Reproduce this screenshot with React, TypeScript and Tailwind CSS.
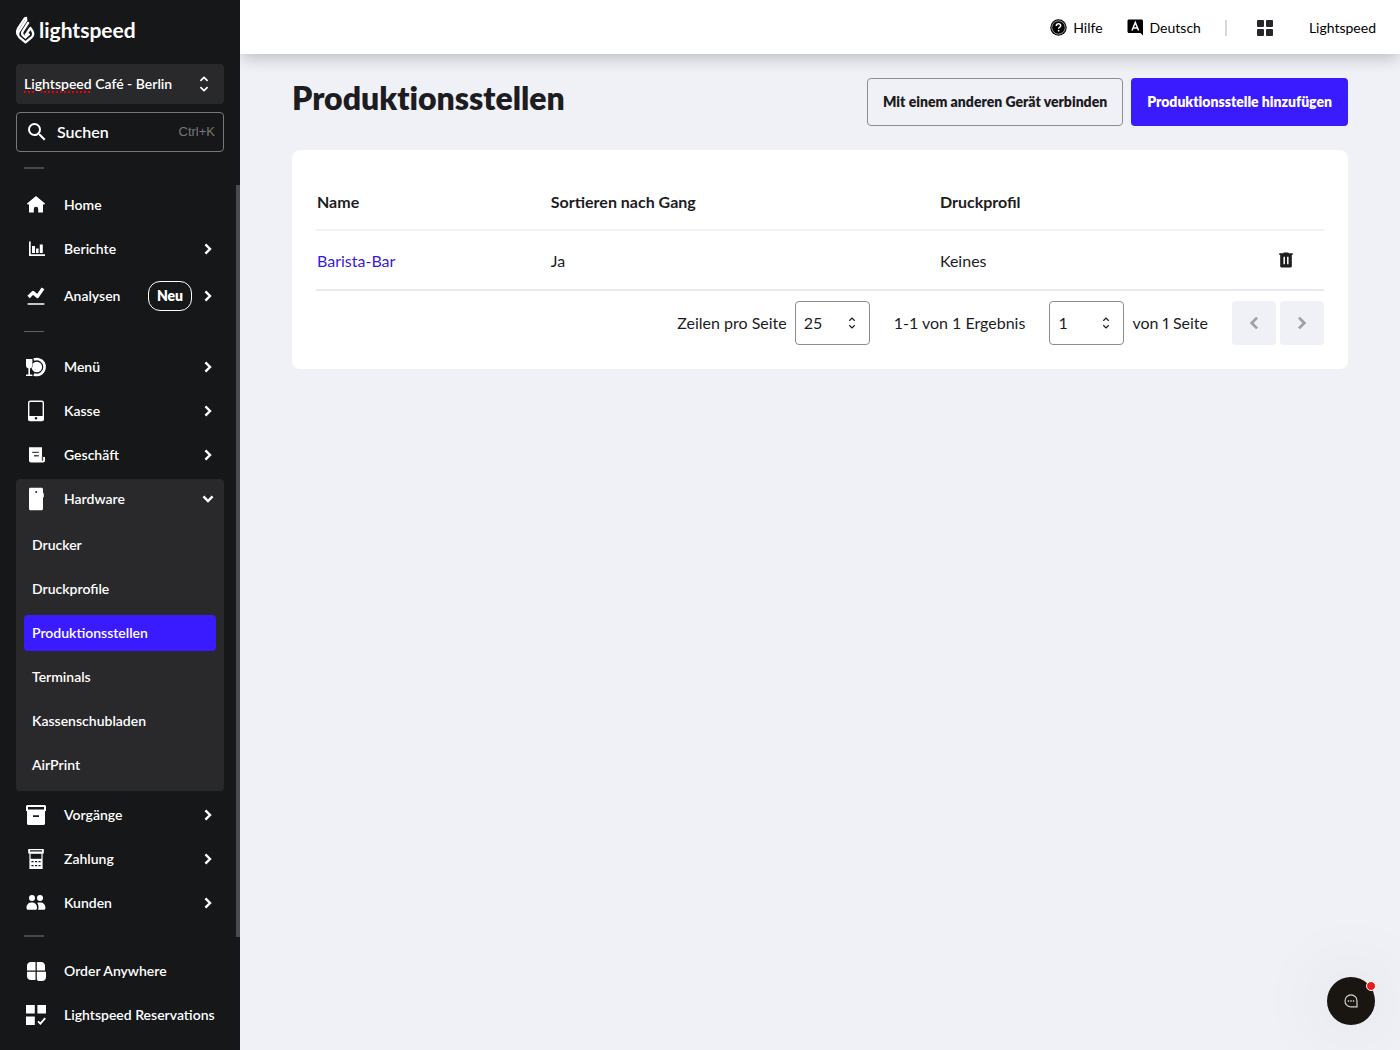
import React, { useState } from "react";
import { MdSearch } from "react-icons/md";

type IconProps = { className?: string };

interface INavItem {
  label: string;
  icon: React.ReactNode;
  arrow?: boolean;
  badge?: string;
}

function Flame() {
  return (
    <svg width="19" height="28" viewBox="0 0 19 28" fill="none" aria-hidden="true">
      <g stroke="#fff" strokeWidth="2.3">
        <path d="M9.9 0.8 10.200 4.400 3.400 14.600C1.600 17.400 1.700 19.600 3.500 21.400L9.500 26.300 15.500 21.400C17.500 19.600 17.700 17.200 16.100 14.600L14.400 12 9.300 19.600" strokeLinejoin="round" />
        <path d="M9.300 1.600 2.400 11.800C.9 14.200.8 16.800 1.800 19" />
        <path d="M12.600 6.200 6.800 15C5.700 16.800 5.900 18.400 7.200 19.600L9.400 21.400 13.400 17.600" />
      </g>
    </svg>
  );
}

function UpDown({ className = "" }: IconProps) {
  return (
    <svg className={className} width="10" height="16" viewBox="0 0 10 16" fill="none" stroke="currentColor" strokeWidth="1.7" aria-hidden="true">
      <path d="M1.4 4.900 5 1.400 8.600 4.900M1.400 11.100 5 14.600 8.600 11.100" />
    </svg>
  );
}

function Chevron({ className = "" }: IconProps) {
  return (
    <svg className={className} width="12" height="12" viewBox="0 0 12 12" fill="none" stroke="currentColor" strokeWidth="2.4" aria-hidden="true">
      <path d="M3.400 1.400 8 6 3.400 10.600" />
    </svg>
  );
}

function HomeIcon() {
  return (
    <svg width="24" height="24" viewBox="0 0 24 24" fill="currentColor" aria-hidden="true">
      <path d="M12 3 21 10.600l-.6.900H19V19.500h-4.800v-3.600a2.200 2.200 0 0 0-4.400 0v3.600H5v-8H3.600l-.6-.9z" />
    </svg>
  );
}

function ReportsIcon() {
  return (
    <svg width="24" height="24" viewBox="0 0 24 24" fill="currentColor" aria-hidden="true">
      <path d="M5 4.500h1.700v12.800H21V19H5zM8 9h3v7H8zM12 11.500h2.600V16H12zM15.800 7.500h3V16h-3z" />
    </svg>
  );
}

function InsightsIcon() {
  return (
    <svg width="24" height="24" viewBox="0 0 24 24" fill="none" stroke="currentColor" aria-hidden="true">
      <path d="M4.600 13 9 8.600l4.500 3.800 5.500-8" strokeWidth="3.400" strokeLinejoin="round" />
      <path d="M3.600 20h16.800" strokeWidth="2" stroke="#c4c4c4" />
    </svg>
  );
}

function MenuIcon() {
  return (
    <svg width="24" height="24" viewBox="0 0 24 24" aria-hidden="true">
      <path d="M9.800 4.500a8 8 0 1 1 0 15" fill="none" stroke="currentColor" strokeWidth="2.600" />
      <circle cx="12.800" cy="12" r="5.300" fill="currentColor" />
      <path d="M2 4h6.400v6.600c0 1.700-1 2.600-2.400 2.800v6h2.400V21H2v-1.600h2.400v-6C3 13 2 12.300 2 10.600z" fill="currentColor" stroke="#161719" strokeWidth=".8" paintOrder="stroke" />
    </svg>
  );
}

function TabletIcon() {
  return (
    <svg width="24" height="24" viewBox="0 0 24 24" aria-hidden="true">
      <rect x="4.700" y="2.200" width="14.600" height="19.400" rx="1.600" fill="none" stroke="currentColor" strokeWidth="1.400" />
      <path d="M4.500 17h15v4.500h-15z" fill="currentColor" />
      <circle cx="12" cy="19.200" r="1.200" fill="#161719" />
    </svg>
  );
}

function ShopIcon() {
  return (
    <svg width="24" height="24" viewBox="0 0 24 24" aria-hidden="true">
      <path d="M5 4.200h13v9.800h3v3.600c0 1.200-.8 1.900-2 1.900H7c-1.200 0-2-.7-2-1.900z" fill="currentColor" />
      <path d="M8.200 9.400h6.600M10 12.800h4.800M18.500 13v4.800" stroke="#4a4a4c" strokeWidth="1.400" />
    </svg>
  );
}

function HardwareIcon() {
  return (
    <svg width="24" height="24" viewBox="0 0 24 24" aria-hidden="true">
      <path d="M6.500.8h11c.9 0 1.500.6 1.500 1.500v3.900h.8v4H19v11.500c0 .9-.6 1.500-1.500 1.500h-11c-.9 0-1.500-.6-1.500-1.500V2.300C5 1.400 5.600.8 6.500.8z" fill="currentColor" />
      <circle cx="12.200" cy="5" r="1" fill="#29292b" />
    </svg>
  );
}

function ArchiveIcon() {
  return (
    <svg width="24" height="24" viewBox="0 0 24 24" aria-hidden="true">
      <path d="M3.500 2h17c.8 0 1.500.7 1.500 1.500V8h-1v12.500c0 .8-.7 1.500-1.500 1.500h-15c-.8 0-1.500-.7-1.500-1.500V8H2V3.500C2 2.700 2.700 2 3.500 2z" fill="currentColor" />
      <path d="M4 4h16v2.600H4zM9 12.200h6V14H9z" fill="#161719" />
    </svg>
  );
}

function TerminalIcon() {
  return (
    <svg width="24" height="24" viewBox="0 0 24 24" aria-hidden="true">
      <path d="M4.200 2h15.600v4.600h-1.200V22H5.400V6.600H4.200z" fill="currentColor" />
      <path d="M6 3.800h12M7.400 14.600h2.200M11 14.600h2.200M14.600 14.600h2M7.400 18.600h2.200M11 18.600h2.200M14.600 18.600h2" stroke="#161719" strokeWidth="1.300" />
      <path d="M6.600 6.800h10.800v5H6.600z" fill="#161719" />
    </svg>
  );
}

function CustomersIcon() {
  return (
    <svg width="24" height="24" viewBox="0 0 24 24" fill="currentColor" aria-hidden="true">
      <circle cx="8" cy="7" r="3" />
      <circle cx="16" cy="7" r="3" />
      <path d="M2.500 16.800c0-3.400 2-5.400 5.300-5.400s5.200 2 5.200 5.400c0 1.500-.4 2-1.600 2H4.200c-1.200 0-1.700-.5-1.700-2zM13.200 11.800c.8-.3 1.800-.4 2.800-.4 3.400 0 5.400 2 5.400 5.400 0 1.500-.5 2-1.700 2h-6c.6-.5.8-1.200.8-2.400 0-2-.4-3.400-1.300-4.600z" />
    </svg>
  );
}

function OrderIcon() {
  return (
    <svg width="24" height="24" viewBox="0 0 24 24" fill="currentColor" aria-hidden="true">
      <path d="M7 3h4.500v8.500H3V7c0-2.400 1.600-4 4-4zM12.800 3H17c2.400 0 4 1.600 4 4v4.500h-8.200zM3 12.800h8.500V21H7c-2.400 0-4-1.600-4-4zM12.800 12.800H22V18c0 2.400-1.600 4-4 4h-3c-1.400 0-2.200-.8-2.200-2.200z" />
    </svg>
  );
}

function ReservationsIcon() {
  return (
    <svg width="24" height="24" viewBox="0 0 24 24" aria-hidden="true">
      <path d="M2 2h8.800v8.600H2zM13.400 2H22v8.600h-8.600zM2 13.400h8.800V22H2z" fill="currentColor" />
      <path d="m14 18.300 2.400 2.400 4.800-5.600" fill="none" stroke="currentColor" strokeWidth="1.800" />
    </svg>
  );
}

function HelpIcon() {
  return (
    <svg width="17" height="17" viewBox="0 0 17 17" aria-hidden="true">
      <circle cx="8.500" cy="8.500" r="8.200" />
      <circle cx="8.500" cy="8.500" r="6.700" fill="none" stroke="#fff" strokeWidth=".6" />
      <path d="M6.300 6.900c0-1.300.9-2.100 2.200-2.100s2.200.8 2.200 1.900c0 1.500-2.100 1.600-2.100 3.100M8.600 10.900v1.500" fill="none" stroke="#fff" strokeWidth="1.500" />
    </svg>
  );
}

function LanguageIcon() {
  return (
    <svg width="17" height="17" viewBox="0 0 17 17" aria-hidden="true">
      <path d="M2 .5h12.500c.9 0 1.500.6 1.500 1.500v14.500L13.500 14H2C1.100 14 .5 13.400.5 12.500V2C.5 1.100 1.100.5 2 .5z" />
      <path d="M5 11.500 8.300 3.400l3.300 8.100M6.200 9h4.200" fill="none" stroke="#fff" strokeWidth="1.500" />
    </svg>
  );
}

function TrashIcon() {
  return (
    <svg width="14" height="16" viewBox="0 0 14 16" aria-hidden="true">
      <path d="M4.500.500h5v.8h4.200V3h-.9v11.300c0 .6-.5 1.200-1.200 1.200H2.400c-.7 0-1.200-.6-1.200-1.200V3H.3V1.300h4.200z" fill="#1d1d1f" />
      <path d="M5.200 4.800v7.400M8.800 4.800v7.400" stroke="#fff" strokeWidth="1.500" />
    </svg>
  );
}

function ChatIcon() {
  return (
    <svg width="14" height="14" viewBox="0 0 14 14" fill="none" stroke="#d5d3cf" aria-hidden="true">
      <path d="M7 .9a6 6 0 1 0 0 12h6V7a6 6 0 0 0-6-6.100z" strokeWidth="1.200" />
      <path d="M3.800 7h1.400M6.300 7h1.400M8.800 7h1.400" strokeWidth="1.400" />
    </svg>
  );
}

const topItems: INavItem[] = [
  { label: "Home", icon: <HomeIcon /> },
  { label: "Berichte", icon: <ReportsIcon />, arrow: true },
  { label: "Analysen", icon: <InsightsIcon />, arrow: true, badge: "Neu" },
];

const shopItems: INavItem[] = [
  { label: "Menü", icon: <MenuIcon />, arrow: true },
  { label: "Kasse", icon: <TabletIcon />, arrow: true },
  { label: "Geschäft", icon: <ShopIcon />, arrow: true },
];

const adminItems: INavItem[] = [
  { label: "Vorgänge", icon: <ArchiveIcon />, arrow: true },
  { label: "Zahlung", icon: <TerminalIcon />, arrow: true },
  { label: "Kunden", icon: <CustomersIcon />, arrow: true },
];

const appItems: INavItem[] = [
  { label: "Order Anywhere", icon: <OrderIcon /> },
  { label: "Lightspeed Reservations", icon: <ReservationsIcon /> },
];

const hardwareItems = [
  "Drucker",
  "Druckprofile",
  "Produktionsstellen",
  "Terminals",
  "Kassenschubladen",
  "AirPrint",
];

function NavItem({ label, icon, arrow, badge }: INavItem) {
  return (
    <li>
      <a
        href="#"
        className={[
          "flex items-center px-2 text-sm font-semibold whitespace-nowrap",
          badge ? "h-[46px]" : "h-10",
        ].join(" ")}
      >
        <span className="w-10 shrink-0">{icon}</span>
        <span className="flex-1">{label}</span>
        {badge && (
          <span className="mr-2.5 flex h-[30px] w-11 items-center justify-center rounded-xl border border-white text-sm font-extrabold">
            {badge}
          </span>
        )}
        {arrow && <Chevron className="mr-0.5" />}
      </a>
    </li>
  );
}

function NavList({ items }: { items: INavItem[] }) {
  return (
    <ul className="flex flex-col gap-1">
      {items.map((item) => (
        <NavItem key={item.label} {...item} />
      ))}
    </ul>
  );
}

function Sidebar() {
  const [open, setOpen] = useState(true);

  return (
    <aside className="w-60 shrink-0 bg-[#161719] pb-4 text-white">
      <div className="px-4 pt-4">
        <a href="#" className="flex h-7 items-center gap-1 text-[21px] font-bold leading-7">
          <Flame />
          lightspeed
        </a>
        <button
          type="button"
          className="mt-5 flex h-10 w-full items-center justify-between rounded bg-[#29292b] pl-2 pr-[15px] text-sm font-semibold"
        >
          <span>
            <span className="underline decoration-dotted decoration-red-600 decoration-2 underline-offset-2">
              Lightspeed
            </span>{" "}
            Café - Berlin
          </span>
          <UpDown />
        </button>
        <label className="mt-2 flex h-10 items-center rounded border border-[#77787a] pl-2 pr-2">
          <MdSearch size={24} aria-hidden="true" />
          <input
            type="text"
            aria-label="Suchen"
            placeholder="Suchen"
            className="ml-2 w-full min-w-0 flex-1 bg-transparent text-base font-semibold outline-none placeholder:text-white"
          />
          <kbd className="font-['Liberation_Sans',sans-serif] text-[13px] text-[#77787a]">Ctrl+K</kbd>
        </label>
        <hr className="ml-2 mt-[15px] w-5 border-t-2 border-[#47484a]" />
      </div>

      <nav className="relative mt-4 px-4" aria-label="Hauptmenü">
        <NavList items={topItems} />
        <hr className="mb-[15px] ml-2 mt-3 w-5 border-[#5f6062]" />
        <NavList items={shopItems} />
        <div className="my-1 rounded bg-[#29292b] pb-2">
          <button
            type="button"
            aria-expanded={open}
            onClick={() => setOpen(!open)}
            className="flex h-10 w-full items-center px-2 text-sm font-semibold"
          >
            <span className="w-10">
              <HardwareIcon />
            </span>
            <span className="flex-1 text-left">Hardware</span>
            <Chevron className={open ? "mr-0.5 rotate-90" : "mr-0.5"} />
          </button>
          {open && (
            <ul className="mt-2 flex flex-col gap-2 px-2">
              {hardwareItems.map((item) => (
                <li key={item}>
                  <a
                    href="#"
                    className={[
                      "flex h-9 items-center rounded px-2 text-sm font-semibold",
                      item === "Produktionsstellen" ? "bg-[#3a1aff]" : "",
                    ].join(" ")}
                  >
                    {item}
                  </a>
                </li>
              ))}
            </ul>
          )}
        </div>
        <NavList items={adminItems} />
        <hr className="ml-2 mt-3 w-5 border-t-2 border-[#47484a]" />
        <div className="absolute inset-y-0 right-0 w-1 bg-[#4b4b4d]" />
      </nav>

      <nav className="mt-[14px] px-4" aria-label="Apps">
        <NavList items={appItems} />
      </nav>
    </aside>
  );
}

function TopBar() {
  return (
    <header className="flex h-[54px] items-center justify-end bg-white pr-6 pt-px text-sm text-black shadow-[0_6px_16px_-2px_rgba(0,0,0,0.22)]">
      <a href="#" className="flex items-center gap-1.5">
        <HelpIcon />
        Hilfe
      </a>
      <button type="button" className="ml-6 flex items-center gap-1.5">
        <LanguageIcon />
        Deutsch
      </button>
      <span className="ml-6 h-4 w-0.5 bg-[#d5d9de]" />
      <button type="button" aria-label="Apps" className="ml-[30px]">
        <svg width="16" height="16" viewBox="0 0 16 16" fill="#26262b" aria-hidden="true">
          <rect width="7" height="7" rx="1" />
          <rect x="9" width="7" height="7" rx="1" />
          <rect y="9" width="7" height="7" rx="1" />
          <rect x="9" y="9" width="7" height="7" rx="1" />
        </svg>
      </button>
      <a href="#" className="ml-9">
        Lightspeed
      </a>
    </header>
  );
}

function PageSelect({ label, options }: { label: string; options: string[] }) {
  return (
    <span className="relative">
      <select
        aria-label={label}
        className="block h-11 w-[75px] appearance-none rounded border border-[#8c8d90] bg-white px-2 text-base"
      >
        {options.map((option) => (
          <option key={option}>{option}</option>
        ))}
      </select>
      <UpDown className="pointer-events-none absolute right-[14px] top-4 h-3 w-2" />
    </span>
  );
}

function Pagination() {
  return (
    <div className="mt-2.5 flex items-center justify-end">
      <span className="mr-2">Zeilen pro Seite</span>
      <PageSelect label="Zeilen pro Seite" options={["25", "50", "100"]} />
      <span className="mx-6">1-1 von 1 Ergebnis</span>
      <PageSelect label="Seite" options={["1"]} />
      <span className="ml-2 mr-6 proportional-nums">von 1 Seite</span>
      <div className="flex gap-1 text-[#a0a1a6]">
        <button
          type="button"
          disabled
          aria-label="Vorherige Seite"
          className="flex h-11 w-11 items-center justify-center rounded bg-[#f0f1f7]"
        >
          <Chevron className="h-3.5 w-3.5 rotate-180" />
        </button>
        <button
          type="button"
          disabled
          aria-label="Nächste Seite"
          className="flex h-11 w-11 items-center justify-center rounded bg-[#f0f1f7]"
        >
          <Chevron className="h-3.5 w-3.5" />
        </button>
      </div>
    </div>
  );
}

function StationsTable() {
  return (
    <table className="w-full table-fixed text-left">
      <colgroup>
        <col className="w-[23.2%]" />
        <col className="w-[38.6%]" />
        <col className="w-[23.6%]" />
        <col />
      </colgroup>
      <thead>
        <tr className="h-14 border-b-2 border-[#f2f2f4]">
          <th className="px-px font-bold">Name</th>
          <th className="px-px font-bold">Sortieren nach Gang</th>
          <th className="px-px font-bold">Druckprofil</th>
          <td />
        </tr>
      </thead>
      <tbody>
        <tr className="h-[60px] border-b-2 border-[#e8e8ee]">
          <td className="px-px pt-0.5">
            <a href="#" className="text-[#3a1ae0]">
              Barista-Bar
            </a>
          </td>
          <td className="px-px pt-0.5">Ja</td>
          <td className="px-px pt-0.5">Keines</td>
          <td className="pr-[31px]">
            <button type="button" aria-label="Löschen" className="ml-auto block">
              <TrashIcon />
            </button>
          </td>
        </tr>
      </tbody>
    </table>
  );
}

function App() {
  return (
    <div className="flex min-h-screen bg-[#f0f1f7] font-[Lato,sans-serif] text-[#1d1d1f]">
      <Sidebar />
      <div className="min-w-0 flex-1 overflow-hidden">
        <TopBar />
        <main className="px-[52px] pt-6">
          <div className="flex items-start justify-between [font-variant-ligatures:no-common-ligatures]">
            <h1 className="text-[32px] font-extrabold leading-10">Produktionsstellen</h1>
            <div className="flex gap-2">
              <button
                type="button"
                className="h-12 rounded border border-[#8c8d90] px-[15px] text-sm font-extrabold"
              >
                Mit einem anderen Gerät verbinden
              </button>
              <button
                type="button"
                className="h-12 rounded bg-[#3a1aff] px-4 text-sm font-extrabold text-white"
              >
                Produktionsstelle hinzufügen
              </button>
            </div>
          </div>
          <section className="mt-6 rounded-lg bg-white p-6">
            <StationsTable />
            <Pagination />
          </section>
        </main>
      </div>

      <button
        type="button"
        aria-label="Chat öffnen"
        className="fixed bottom-[25px] right-[25px] flex h-12 w-12 items-center justify-center rounded-full bg-[#191511] shadow-[0_0_80px_rgba(0,0,0,0.12)]"
      >
        <ChatIcon />
        <span className="absolute -right-px top-1 h-2.5 w-2.5 rounded-full border border-white bg-[#e81c1c]" />
      </button>
    </div>
  );
}

export default App;
